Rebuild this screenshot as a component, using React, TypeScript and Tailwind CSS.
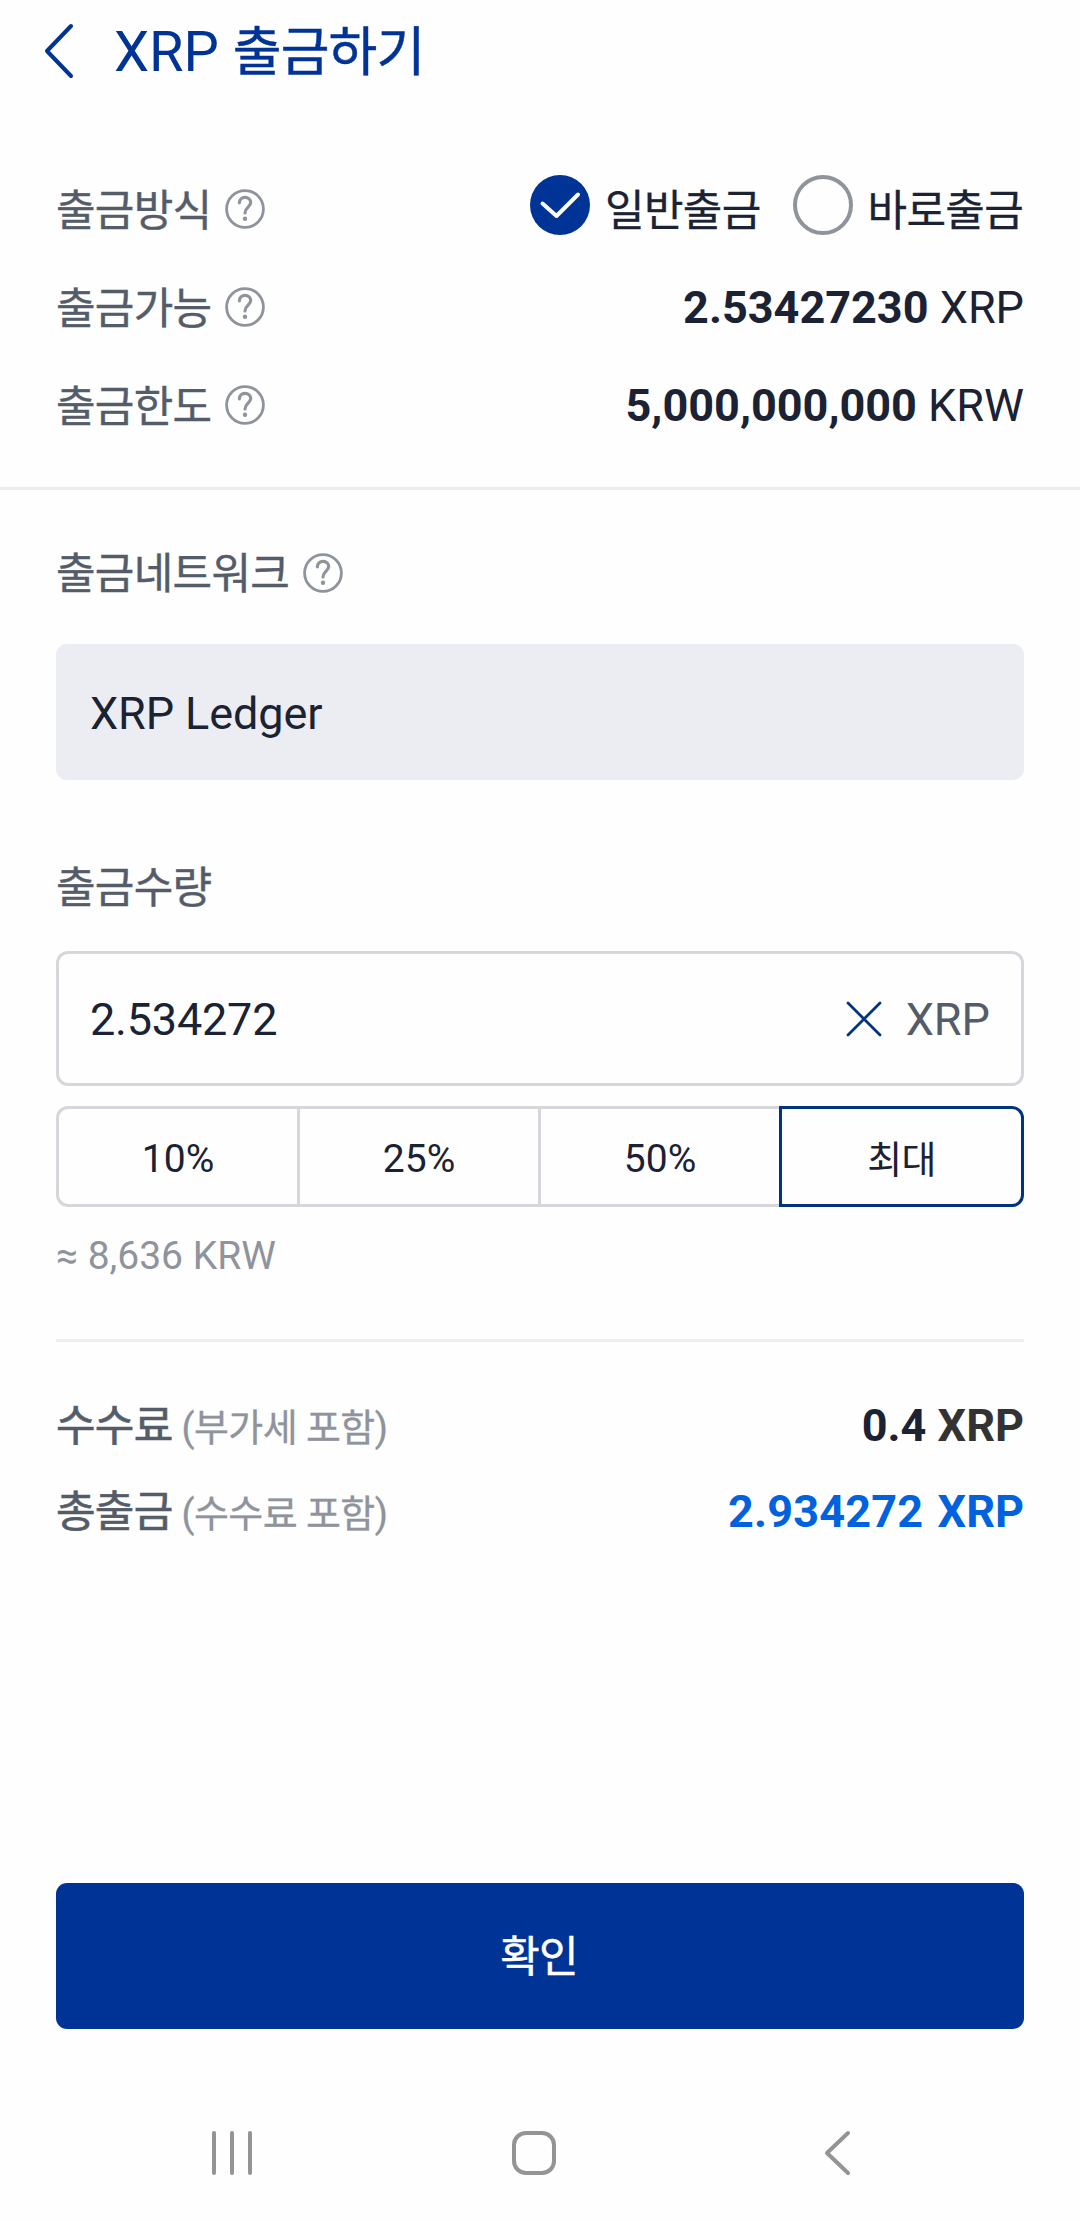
import type { ReactNode } from 'react';

const percents = ['10%', '25%', '50%'];

function HelpIcon() {
    return (
        <svg width="40" height="40" viewBox="0 0 40 40" fill="none" stroke="#8f939c" className="shrink-0">
            <circle cx="20" cy="20" r="18.4" strokeWidth="2.8" />
            <path d="M14.4 13.800c0-3.100 2.400-5.400 5.600-5.400 3.300 0 5.700 2.200 5.700 5.200 0 4.400-5.700 4.900-5.700 10.400" strokeWidth="3.200" strokeLinecap="round" />
            <circle cx="20" cy="29.800" r="2.200" fill="#8f939c" stroke="none" />
        </svg>
    );
}

function Label({ children, help }: { children: string; help?: boolean }) {
    return (
        <div className="flex items-center">
            <span className="pt-[3px] text-[43px] leading-[60px] tracking-[-0.7px] font-normal text-[#555c69] [-webkit-text-stroke:0.4px_#555c69]">{children}</span>
            {help && <span className="ml-[14px]"><HelpIcon /></span>}
        </div>
    );
}

function InfoRow({ label, children }: { label: string; children: ReactNode }) {
    return (
        <div className="flex items-center justify-between h-[98px] text-[45px] text-[#1a2233]">
            <Label help>{label}</Label>
            {children}
        </div>
    );
}

function FeeRow({ label, note, children }: { label: string; note: string; children: ReactNode }) {
    return (
        <div className="flex items-center justify-between h-[86px]">
            <div className="flex items-baseline pt-[4px]">
                <span className="text-[43px] leading-[60px] tracking-[-0.7px] text-[#555c69] [-webkit-text-stroke:0.7px_#555c69]">{label}</span>
                <span className="ml-[9px] text-[38px] leading-[60px] tracking-[-0.6px] text-[#8f939c] [-webkit-text-stroke:0.3px_#8f939c]">{note}</span>
            </div>
            <div className="pt-[2px] text-[45px] leading-[60px] font-bold">{children}</div>
        </div>
    );
}

export default function App() {
    return (
        <div className="w-[1080px] h-[2221px] bg-[#fefefe] flex flex-col overflow-hidden font-['Roboto','Noto_Sans_CJK_KR',sans-serif]">
            <header className="flex items-center h-[102px] pl-[42px]">
                <svg width="32" height="56" viewBox="0 0 32 56" fill="none" stroke="#003396" strokeWidth="4" strokeLinecap="round" strokeLinejoin="round">
                    <path d="M29 3L5 28L29 53" />
                </svg>
                <h1 className="ml-[40px] pt-[3px] text-[56px] leading-[80px] text-[#003396]">
                    XRP <span className="text-[53px] tracking-[-0.9px] [-webkit-text-stroke:0.5px_#003396]">출금하기</span>
                </h1>
            </header>

            {/* Withdrawal summary */}
            <section className="h-[388px] pt-[58px] px-[56px] border-b-[3px] border-[#ecedf1]">
                <InfoRow label="출금방식">
                    <div className="flex items-center pr-px text-[43px] leading-[60px] tracking-[-0.7px]">
                        <svg width="60" height="60" viewBox="0 0 60 60" fill="none" className="mb-[8px]">
                            <circle cx="30" cy="30" r="30" fill="#003396" />
                            <path d="M12.500 28.500L26.500 41L48 19.500" stroke="#fff" strokeWidth="4" strokeLinecap="round" strokeLinejoin="round" />
                        </svg>
                        <span className="ml-[15px] pt-[3px] [-webkit-text-stroke:0.3px_#1a2233]">일반출금</span>
                        <span className="ml-[32px] mb-[8px] size-[60px] rounded-full border-4 border-[#8f939c]" />
                        <span className="ml-[15px] pt-[3px] [-webkit-text-stroke:0.3px_#1a2233]">바로출금</span>
                    </div>
                </InfoRow>
                <InfoRow label="출금가능">
                    <div className="pt-[2px]"><span className="font-bold">2.53427230</span> XRP</div>
                </InfoRow>
                <InfoRow label="출금한도">
                    <div className="pt-[2px]"><span className="font-bold">5,000,000,000</span> KRW</div>
                </InfoRow>
            </section>

            {/* Network and amount */}
            <section className="px-[56px] pt-[51px]">
                <Label help>출금네트워크</Label>
                <div className="mt-[40px] h-[136px] rounded-[11px] bg-[#ecedf2] flex items-center pl-[34px] pt-[3px] text-[45px] tracking-[-0.1px] text-[#1a2233]">
                    XRP Ledger
                </div>
                <div className="mt-[75px]">
                    <Label>출금수량</Label>
                </div>
                <div className="mt-[33px] h-[135px] rounded-[12px] border-[3px] border-[#d6d7dc] flex items-center px-[31px] text-[45px]">
                    <span className="flex-1 pt-[2px] tracking-[-0.2px] text-[#1a2233]">2.534272</span>
                    <svg width="36" height="36" viewBox="0 0 36 36" fill="none" stroke="#003380" strokeWidth="2.800" strokeLinecap="round">
                        <path d="M2 2L34 34M34 2L2 34" />
                    </svg>
                    <span className="ml-[24px] pt-[2px] text-[#555c69]">XRP</span>
                </div>
                <div className="mt-[20px] h-[101px] flex text-[39px] text-[#1a2233]">
                    {percents.map((p) => (
                        <button key={p} className="w-[244px] -mr-[3px] pt-[5px] border-[3px] border-[#d6d7dc] first:rounded-l-[12px]">{p}</button>
                    ))}
                    <button className="relative flex-1 pt-[7px] border-[3px] border-[#003380] rounded-r-[12px] text-[38px] tracking-[-0.6px]">최대</button>
                </div>
                <p className="mt-[24px] text-[39px] leading-[50px] text-[#8f939c]">≈ 8,636 KRW</p>
            </section>

            {/* Fees */}
            <section className="mx-[56px] mt-[58px] pt-[40px] border-t-[3px] border-[#eeeeee]">
                <FeeRow label="수수료" note="(부가세 포함)">
                    <span className="text-[#1a2233]">0.4</span> <span className="text-[#333333]">XRP</span>
                </FeeRow>
                <FeeRow label="총출금" note="(수수료 포함)">
                    <span className="text-[#0062df]"><span className="mr-[3px] tracking-[0.2px]">2.934272</span> XRP</span>
                </FeeRow>
            </section>

            <button className="mx-[56px] mt-auto h-[146px] shrink-0 rounded-[11px] bg-[#003396] pt-[3px] pr-[2px] text-[43px] tracking-[-0.7px] text-white [-webkit-text-stroke:0.5px_#fff]">
                확인
            </button>

            {/* System navigation */}
            <nav className="mt-[53px] h-[139px] shrink-0 flex items-center pl-[210px] pt-[2px] text-[#949494]">
                <svg width="44" height="46" viewBox="0 0 44 46" stroke="currentColor" strokeWidth="4" strokeLinecap="round">
                    <path d="M4 3V43M22 3V43M40 3V43" />
                </svg>
                <span className="ml-[258px] size-[44px] rounded-[14px] border-4 border-current" />
                <svg width="30" height="48" viewBox="0 0 30 48" fill="none" stroke="currentColor" strokeWidth="4" strokeLinecap="round" strokeLinejoin="round" className="ml-[266px]">
                    <path d="M26 4L5 24L26 44" />
                </svg>
            </nav>
        </div>
    );
}
